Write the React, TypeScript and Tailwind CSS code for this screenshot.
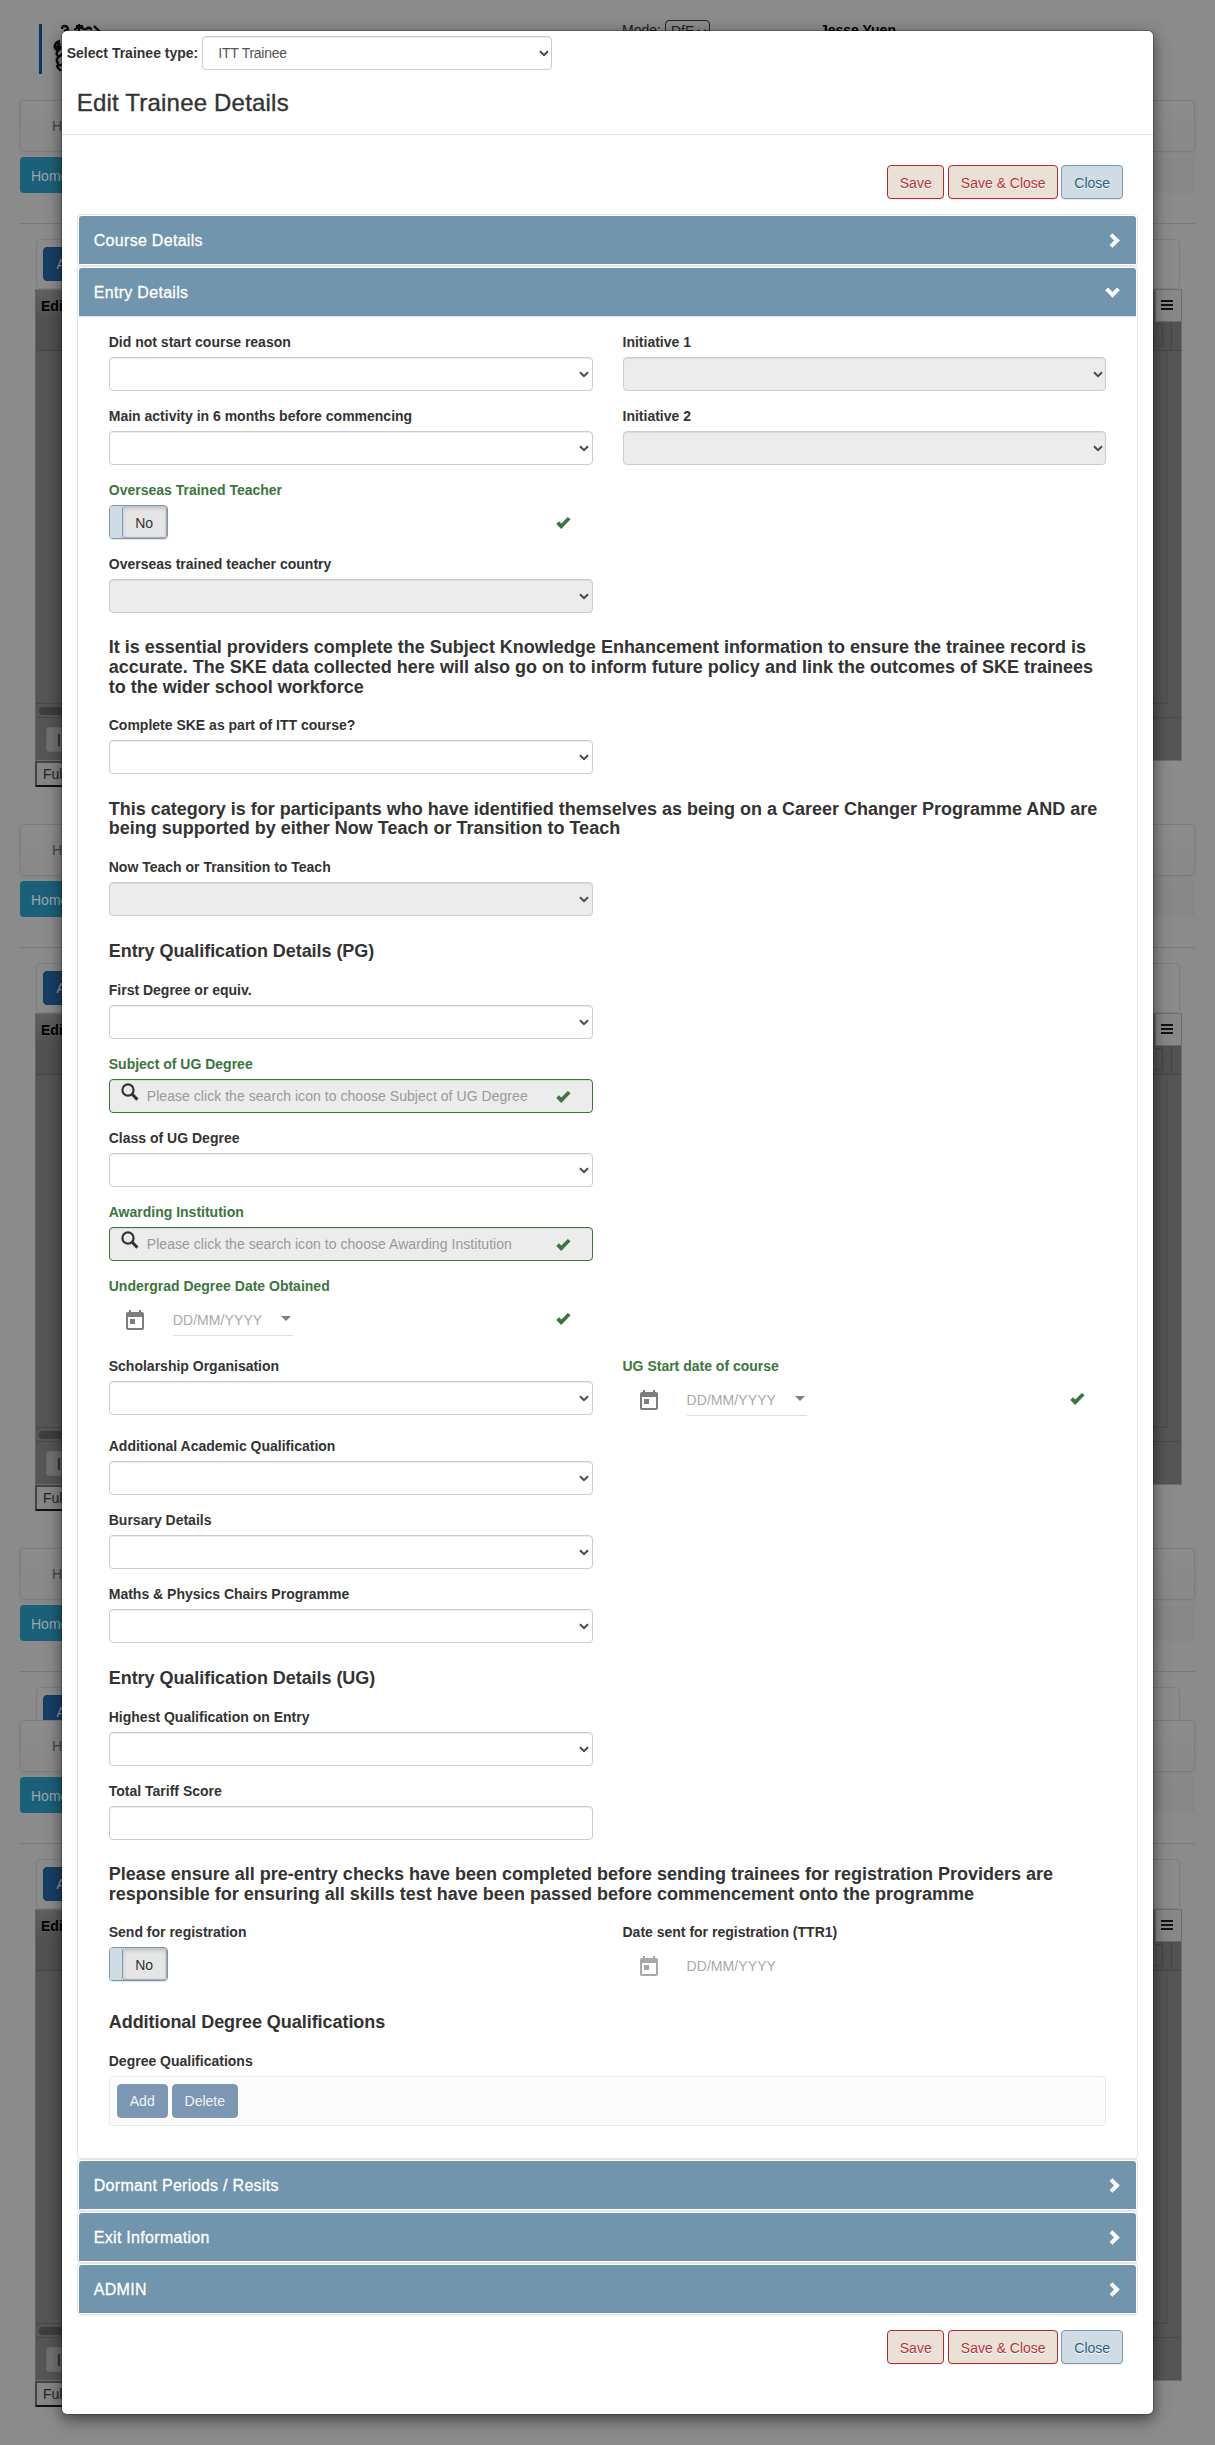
import React from "react";
import { MdToday } from "react-icons/md";

function Check() {
  return (
    <svg className="absolute right-[21.5px] top-3 h-3 w-[15px]" viewBox="0 0 15 12" fill="#3c763d">
      <path d="M5.2 12 0.3 7.1 2.9 4.3 5.4 6.6 11.8 0 14.6 2.2Z" strokeLinejoin="round" />
    </svg>
  );
}

function Arrow() {
  return (
    <svg className="pointer-events-none absolute right-[3.5px] top-[14px] h-[7px] w-[10px]" viewBox="0 0 10 7" fill="none">
      <path d="M1 1.2 5 5.2 9 1.2" stroke="#4a4a4a" strokeWidth="2" />
    </svg>
  );
}

function Select({ disabled, value, label }: { disabled?: boolean; value?: string; label?: string }) {
  return (
    <div className="relative h-[34px]">
      <select
        disabled={disabled}
        aria-label={label}
        className={
          "block h-[34px] w-full appearance-none rounded border border-[#ccc] px-[15px] text-sm tracking-[-0.25px] text-[#555] opacity-100 shadow-[inset_0_1px_1px_rgba(0,0,0,0.075)] " +
          (disabled ? "bg-[#ececec]" : "bg-white")
        }
      >
        <option>{value ?? ""}</option>
      </select>
      <Arrow />
    </div>
  );
}

function Field({ label, ok, wide, children }: { label: string; ok?: boolean; wide?: boolean; children: React.ReactNode }) {
  return (
    <div className={wide ? "h-20" : "h-[74px]"}>
      <label className={"mb-[5px] block h-5 whitespace-nowrap font-bold leading-5 " + (ok ? "text-[#3c763d]" : "")}>{label}</label>
      <div className="relative">
        {children}
        {ok && <Check />}
      </div>
    </div>
  );
}

function Toggle() {
  return (
    <div className="flex h-[34px] w-[59px] overflow-hidden rounded border border-[#7a97b5] shadow-[0_1px_1px_rgba(0,0,0,0.12)]">
      <span className="w-[13.5px] rounded-r-[3px] border-r border-[#7a97b5] bg-[#d0dce4]" />
      <span className="flex flex-1 items-center bg-[#e6e6e6] pl-3 pt-px text-[#333] shadow-[inset_0_2px_4px_rgba(0,0,0,0.2),inset_-1px_-1px_1px_rgba(0,0,0,0.25)]">No</span>
    </div>
  );
}

function Search({ placeholder }: { placeholder: string }) {
  return (
    <div className="relative h-[34px] rounded border border-[#3c763d] bg-[#ececec] shadow-[inset_0_1px_1px_rgba(0,0,0,0.075)]">
      <svg className="absolute left-[11px] top-[3px] h-[18px] w-[18px]" viewBox="0 0 18 18" fill="none" stroke="#333">
        <circle cx="7" cy="7" r="5.6" strokeWidth="2.2" />
        <path d="M11 11 16.4 16.6" strokeWidth="3" />
      </svg>
      <span className="block whitespace-nowrap pl-[37px] leading-[33px] tracking-[0.047px] text-[#999]">{placeholder}</span>
    </div>
  );
}

function DateInput({ disabled }: { disabled?: boolean }) {
  return (
    <div className="flex h-10 pl-[14px]">
      <MdToday size={24} className={"mr-[26px] mt-2 " + (disabled ? "text-[#a8a8a8]" : "text-[#7d7d7d]")} />
      <div className={"flex h-[35px] w-[120px] justify-between pt-[9px] leading-5 tracking-[0.08px] text-[#a9a9a9] " + (disabled ? "" : "border-b border-[#dedede]")}>
        DD/MM/YYYY
        {!disabled && (
          <svg className="mr-[2px] mt-[6px] h-[5px] w-[10px]" viewBox="0 0 10 5">
            <path d="M0 0h10L5 5z" fill="#7d7d7d" />
          </svg>
        )}
      </div>
    </div>
  );
}

function Note({ children }: { children: React.ReactNode }) {
  return <h4 className="pb-[17.4px] pt-[10.4px] text-lg font-bold leading-[19.8px]">{children}</h4>;
}

function Heading({ children }: { children: React.ReactNode }) {
  return <h4 className="h-[49.2px] whitespace-nowrap pt-[11px] text-lg font-bold leading-[19.8px] tracking-[-0.05px]">{children}</h4>;
}

function Row({ left, right }: { left: React.ReactNode; right?: React.ReactNode }) {
  return (
    <div className="grid grid-cols-2 gap-[30px]">
      {left}
      {right}
    </div>
  );
}

function Panel({ title, open, children }: { title: string; open?: boolean; children?: React.ReactNode }) {
  return (
    <section className={"rounded border border-[#e4e4e4] p-px shadow-[0_1px_1px_rgba(0,0,0,0.07)] " + (open ? "h-[1893px]" : "h-[52px]")}>
      <header className="flex h-12 items-center justify-between rounded-t-[3px] bg-[#7195ad] pl-[15px] pr-4">
        <h4 className="pt-[2px] text-base leading-5 tracking-[0.3px] text-white [-webkit-text-stroke:0.3px_white]">{title}</h4>
        {open ? (
          <svg className="mb-[-1px] h-[11px] w-[15px]" viewBox="0 0 15 11" fill="none">
            <path d="M1.6 1.8 7.5 7.9 13.4 1.8" stroke="#fff" strokeWidth="4" />
          </svg>
        ) : (
          <svg className="mt-[1px] h-[15px] w-[11px]" viewBox="0 0 11 15" fill="none">
            <path d="M2 1.6 8 7.5 2 13.4" stroke="#fff" strokeWidth="4" />
          </svg>
        )}
      </header>
      {children}
    </section>
  );
}

function Actions() {
  const red = "flex h-[34px] items-center justify-center rounded border border-[#b52b2b] bg-[#e9e1d6] pt-px text-[#b93238] [text-shadow:0_1px_0_#fff] shadow-[0_1px_1px_rgba(0,0,0,0.08)] ";
  return (
    <div className="flex justify-end pr-[30px]">
      <button className={red + "mr-1 w-[57px]"}>Save</button>
      <button className={red + "mr-[3px] w-[110px]"}>Save &amp; Close</button>
      <button className="flex h-[34px] w-[62px] items-center justify-center rounded border border-[#7a97b5] bg-[#d0dce4] pt-px text-[#2b5f7d] shadow-[0_1px_1px_rgba(0,0,0,0.08)] [text-shadow:0_1px_0_#fff]">Close</button>
    </div>
  );
}

function BackPage({ height, clipped }: { height: string; clipped?: boolean }) {
  return (
    <div className={"overflow-hidden " + height}>
      <div className="mx-5 flex h-[52px] items-center rounded border border-[#7c7c7c] bg-gradient-to-b from-[#8c8c8c] to-[#888] pl-[31px] text-[#444] shadow-[0_1px_5px_rgba(0,0,0,0.06)]">Home</div>
      <div className="mx-5 mt-[5px] h-9 rounded bg-[#878787]">
        <div className="flex h-9 w-20 items-center rounded bg-[#1b6079] pl-[11px] pt-px text-[#a0a5a8]">Home</div>
      </div>
      <div className="mx-5 mt-[30px] h-px bg-[#7a7a7a]" />
      <div className="mx-[35.5px] mt-[15px] h-[50px] rounded border border-[#7d7d7d] px-[6px] py-[7px]">
        <div className="flex h-[34px] w-14 items-center rounded border border-[#143a5c] bg-[#173f66] pl-[13px] text-[#989ea4]">Add</div>
      </div>
      {!clipped && (
        <>
          <div className="ml-[35px] mr-[33px] flex h-[472px] flex-col border border-b-[#707070] border-l-[#626262] border-r-[#6c6c6c] border-t-[#707070] bg-[#555]">
            <div className="flex h-[61px] justify-between border-b border-[#454545] bg-gradient-to-b from-[#606060] via-[#525252] to-[#515151]">
              <span className="pl-[5px] pt-[6px] font-bold leading-5 text-black">Edit</span>
              <div className="w-[26px]">
                <div className="flex h-8 w-[26px] flex-col items-center justify-center gap-[2px] border-b border-l border-[#6a6a6a] bg-[#878787] pr-1 pb-[2px]">
                  <i className="block h-[2px] w-3 bg-[#111]" />
                  <i className="block h-[2px] w-3 bg-[#111]" />
                  <i className="block h-[2px] w-3 bg-[#111]" />
                </div>
                <div className="flex h-7">
                  <div className="mt-[2px] h-[22px] w-2 border-y border-r border-[#444]" />
                  <div className="h-7 w-[9px] border-r border-[#454545]" />
                </div>
              </div>
            </div>
            <div className="mr-[14px] h-[353px] border-b border-r border-[#494949]" />
            <div className="h-[14px] border-b border-[#494949] pl-[3px] pt-[3px]">
              <div className="h-2 w-24 rounded bg-[#3d3d3d]" />
            </div>
            <div className="ml-[10px] mt-[9px] flex h-[25px] w-10 items-center rounded-[3px] border border-[#686868] bg-[#707070] pl-[11px]">
              <i className="block h-3 w-[2px] bg-[#333]" />
            </div>
          </div>
          <div className="ml-[35px] flex h-[26px] w-24 items-center border-2 border-b-[#111] border-l-[#444] border-r-[#111] border-t-[#444] bg-[#868686] pl-[6px] text-[#222]">Full</div>
        </>
      )}
    </div>
  );
}

function Backdrop() {
  return (
    <div className="col-start-1 row-start-1 h-[2445px] overflow-hidden">
      <div className="flex h-[100px] items-start">
        <div className="ml-[39px] mt-6 h-[50px] w-[3px] bg-[#063763]" />
        <svg className="ml-[10px] mt-6 h-[50px] w-[52px]" viewBox="0 0 52 50" fill="none" stroke="#0a0a0a" strokeWidth="2.4">
          <path d="M10 5c0-4 5-4 6 0M12 7l5-2M23 6c0-3 9-3 9 0M34 6c0-3 5-3 5 0M42 2l6 6" />
          <path d="M27 0v7M24 2h7" strokeWidth="2" />
          <path d="M8 17c-4 1-6 4-5 7 1 3 4 1 6-2M8 19c-2 3-3 4-4 5M9 24c-4 3-6 6-3 8 2 1 4-1 4-3M9 31c-5 3-5 6-3 8M6 37c-1 5 2 5 4 3M5 41c0 4 3 4 4 6" />
        </svg>
        <div className="ml-[518px] mt-5 flex h-6 items-start leading-5 text-[#1c1c1c]">
          Mode:
          <div className="ml-1 flex h-6 w-[45px] items-start rounded-sm border border-[#222] pl-[5px]">
            DfE
            <svg className="ml-[3px] mt-2 h-[7px] w-[10px] shrink-0" viewBox="0 0 10 7" fill="none">
              <path d="M1 1.2 5 5.2 9 1.2" stroke="#0a0a0a" strokeWidth="2" />
            </svg>
          </div>
        </div>
        <div className="ml-[110px] mt-5 font-bold leading-5 text-black">Jesse Yuen</div>
      </div>
      <BackPage height="h-[724px]" />
      <BackPage height="h-[724px]" />
      <BackPage height="h-[172px]" clipped />
      <BackPage height="h-[725px]" />
    </div>
  );
}

export default function App() {
  return (
    <div className="grid h-[2445px] w-full overflow-hidden bg-[#8b8b8b] font-['Liberation_Sans',Arial,sans-serif] text-sm leading-5 text-[#333]">
      <Backdrop />
      <main className="relative col-start-1 row-start-1 mt-[30px] h-[2385px] w-[90%] justify-self-center rounded-[6px] border border-black/20 bg-white bg-clip-padding shadow-[0_5px_15px_rgba(0,0,0,0.5)]">
        <div className="flex h-11 items-center py-[2px] pl-[5px]">
          <span className="mr-1 whitespace-nowrap font-bold">Select Trainee type:</span>
          <div className="w-[350px]">
            <Select label="Trainee type" value="ITT Trainee" />
          </div>
        </div>
        <div className="h-[60px] border-b border-[#e0e0e0] pl-[15px] pt-[15px]">
          <h3 className="text-2xl leading-[26.4px] tracking-[0.2px] [-webkit-text-stroke:0.35px_#333]">Edit Trainee Details</h3>
        </div>
        <div className="pt-[30px]">
          <Actions />
        </div>
        <div className="mt-[15px] px-[15px]">
          <Panel title="Course Details" />
          <Panel title="Entry Details" open>
            <div className="border-t border-[#ddd] px-[30px] pt-[15px]">
              <Row
                left={<Field label="Did not start course reason"><Select /></Field>}
                right={<Field label="Initiative 1"><Select disabled /></Field>}
              />
              <Row
                left={<Field label="Main activity in 6 months before commencing"><Select /></Field>}
                right={<Field label="Initiative 2"><Select disabled /></Field>}
              />
              <Row left={<Field label="Overseas Trained Teacher" ok><Toggle /></Field>} />
              <Row left={<Field label="Overseas trained teacher country"><Select disabled /></Field>} />
              <Note>
                It is essential providers complete the Subject Knowledge Enhancement information to ensure the trainee record is
                accurate. The SKE data collected here will also go on to inform future policy and link the outcomes of SKE trainees
                to the wider school workforce
              </Note>
              <Row left={<Field label="Complete SKE as part of ITT course?"><Select /></Field>} />
              <Note>
                This category is for participants who have identified themselves as being on a Career Changer Programme AND are
                being supported by either Now Teach or Transition to Teach
              </Note>
              <Row left={<Field label="Now Teach or Transition to Teach"><Select disabled /></Field>} />
              <Heading>Entry Qualification Details (PG)</Heading>
              <Row left={<Field label="First Degree or equiv."><Select /></Field>} />
              <Row left={<Field label="Subject of UG Degree" ok><Search placeholder="Please click the search icon to choose Subject of UG Degree" /></Field>} />
              <Row left={<Field label="Class of UG Degree"><Select /></Field>} />
              <Row left={<Field label="Awarding Institution" ok><Search placeholder="Please click the search icon to choose Awarding Institution" /></Field>} />
              <Row left={<Field label="Undergrad Degree Date Obtained" ok wide><DateInput /></Field>} />
              <Row
                left={<Field label="Scholarship Organisation" wide><Select /></Field>}
                right={<Field label="UG Start date of course" ok wide><DateInput /></Field>}
              />
              <Row left={<Field label="Additional Academic Qualification"><Select /></Field>} />
              <Row left={<Field label="Bursary Details"><Select /></Field>} />
              <Row left={<Field label="Maths & Physics Chairs Programme"><Select /></Field>} />
              <Heading>Entry Qualification Details (UG)</Heading>
              <Row left={<Field label="Highest Qualification on Entry"><Select /></Field>} />
              <Row
                left={
                  <Field label="Total Tariff Score">
                    <input aria-label="Total Tariff Score" className="block h-[34px] w-full rounded border border-[#ccc] bg-white shadow-[inset_0_1px_1px_rgba(0,0,0,0.075)]" />
                  </Field>
                }
              />
              <Note>
                Please ensure all pre-entry checks have been completed before sending trainees for registration Providers are
                responsible for ensuring all skills test have been passed before commencement onto the programme
              </Note>
              <Row
                left={<Field label="Send for registration" wide><Toggle /></Field>}
                right={<Field label="Date sent for registration (TTR1)" wide><DateInput disabled /></Field>}
              />
              <Heading>Additional Degree Qualifications</Heading>
              <div className="mb-[5px] font-bold leading-5">Degree Qualifications</div>
              <div className="flex h-[50px] gap-1 rounded border border-[#e9e9e9] bg-[#fcfcfc] p-[7px]">
                <button className="h-[34px] w-[51px] rounded border border-[#7a9abb] bg-[#7b97b4] text-[#f0f4f7]">Add</button>
                <button className="h-[34px] w-[66px] rounded border border-[#7a9abb] bg-[#7b97b4] text-[#f0f4f7]">Delete</button>
              </div>
            </div>
          </Panel>
          <Panel title="Dormant Periods / Resits" />
          <Panel title="Exit Information" />
          <Panel title="ADMIN" />
        </div>
        <div className="pt-[15px]">
          <Actions />
        </div>
      </main>
    </div>
  );
}
